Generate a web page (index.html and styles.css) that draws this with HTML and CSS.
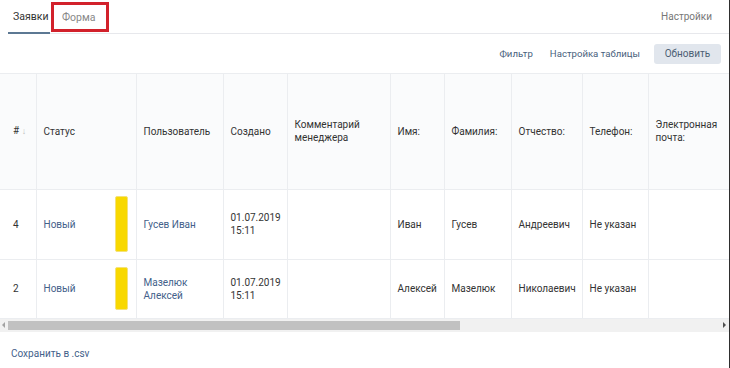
FILE: index.html
```html
<!DOCTYPE html>
<html lang="ru">

<head>
	<meta charset="UTF-8">
	<meta name="viewport" content="width=device-width, initial-scale=1.0">
	<title>Заявки</title>
	<link rel="stylesheet" href="styles.css">
</head>

<body>
	<div class="page">
		<nav class="tabs">
			<a class="tab active" href="#">Заявки</a>
			<a class="tab marked" href="#">Форма</a>
			<a class="tab settings" href="#">Настройки</a>
		</nav>

		<div class="toolbar">
			<a class="tool-link" href="#">Фильтр</a>
			<a class="tool-link" href="#">Настройка таблицы</a>
			<button class="refresh" type="button">Обновить</button>
		</div>

		<div class="table-wrap">
			<table class="orders">
				<colgroup>
					<col class="c-num">
					<col class="c-status">
					<col class="c-user">
					<col class="c-date">
					<col class="c-comment">
					<col class="c-name">
					<col class="c-surname">
					<col class="c-patronymic">
					<col class="c-phone">
					<col class="c-email">
					<col class="c-rest">
				</colgroup>
				<thead>
					<tr>
						<th class="num"># <span class="sort">&#8595;</span></th>
						<th>Статус</th>
						<th>Пользователь</th>
						<th>Создано</th>
						<th>Комментарий<br>менеджера</th>
						<th>Имя:</th>
						<th>Фамилия:</th>
						<th>Отчество:</th>
						<th>Телефон:</th>
						<th>Электронная<br>почта:</th>
						<th></th>
					</tr>
				</thead>
				<tbody>
					<tr class="row-tall">
						<td class="num">4</td>
						<td>
							<div class="status"><a href="#">Новый</a><span class="bar"></span></div>
						</td>
						<td><a href="#">Гусев Иван</a></td>
						<td>01.07.2019<br>15:11</td>
						<td></td>
						<td>Иван</td>
						<td>Гусев</td>
						<td>Андреевич</td>
						<td>Не указан</td>
						<td></td>
						<td></td>
					</tr>
					<tr class="row-short">
						<td class="num">2</td>
						<td>
							<div class="status"><a href="#">Новый</a><span class="bar"></span></div>
						</td>
						<td><a href="#">Мазелюк<br>Алексей</a></td>
						<td>01.07.2019<br>15:11</td>
						<td></td>
						<td>Алексей</td>
						<td>Мазелюк</td>
						<td>Николаевич</td>
						<td>Не указан</td>
						<td></td>
						<td></td>
					</tr>
				</tbody>
			</table>
		</div>

		<div class="scrollbar">
			<span class="arrow left"></span>
			<div class="track"><div class="thumb"></div></div>
			<span class="arrow right"></span>
		</div>

		<footer class="footer">
			<a href="#">Сохранить в .csv</a>
		</footer>
	</div>
</body>

</html>
```

FILE: styles.css
```css
* {
	margin: 0;
	padding: 0;
	box-sizing: border-box;
	font-family: Roboto, 'Liberation Sans', sans-serif;
}

body {
	background: #fff;
	color: #333;
	font-size: 10px;
}

a {
	color: #43618a;
	text-decoration: none;
}

.page {
	width: 730px;
	height: 368px;
	border-right: 1px solid #2e2e2e;
	overflow: hidden;
}

/* tabs */

.tabs {
	display: flex;
	height: 34px;
	margin-left: 8px;
	padding-right: 12px;
	border-bottom: 1px solid #e7e8ec;
}

.tab {
	display: flex;
	align-items: center;
	padding: 0 5px;
	color: #888;
	font-size: 10.5px;
}

.tab.active {
	width: 42px;
	color: #333;
	border-bottom: 2px solid #5c7893;
	margin-bottom: -1px;
}

.tab.marked {
	width: 58px;
	margin: 2px 0 1px 1px;
	padding: 0 0 0 8px;
	border: 3px solid #d2212b;
}

.tab.settings {
	margin-left: auto;
	color: #777;
	font-size: 10px;
}

/* toolbar */

.toolbar {
	display: flex;
	align-items: center;
	justify-content: flex-end;
	height: 39px;
	padding-right: 8px;
}

.tool-link {
	color: #47607c;
	margin-left: 17px;
	font-size: 9.6px;
}

.refresh {
	margin-left: 14px;
	width: 67px;
	height: 20px;
	border: none;
	border-radius: 3px;
	background: #e1e6ed;
	color: #4c5f74;
	font-size: 10px;
}

/* table */

.table-wrap {
	overflow: hidden;
	border-top: 1px solid #ebedf0;
}

.orders {
	table-layout: fixed;
	width: 1160px;
	border-collapse: collapse;
}

.c-num { width: 36px; }
.c-status { width: 100px; }
.c-user { width: 87px; }
.c-date { width: 64px; }
.c-comment { width: 103px; }
.c-name { width: 54px; }
.c-surname { width: 67px; }
.c-patronymic { width: 71px; }
.c-phone { width: 66px; }
.c-email { width: 130px; }

.orders th,
.orders td {
	border-right: 1px solid #ebedf0;
	border-bottom: 1px solid #ebedf0;
	padding: 0 6px 0 7px;
	text-align: left;
	vertical-align: middle;
	line-height: 13px;
	font-weight: 400;
}

.orders th {
	height: 115px;
	background: #fafbfc;
}

.orders .num {
	padding-left: 13px;
}

.sort {
	color: #bbb;
	font-size: 9px;
}

.row-tall td {
	height: 70px;
}

.row-short td {
	height: 59px;
}

.status {
	display: flex;
	align-items: center;
	justify-content: space-between;
	padding-right: 2px;
}

.bar {
	width: 13px;
	border-radius: 2px;
	background: #f8d800;
	border: 1px solid #f4e27a;
}

.row-tall .bar {
	height: 56px;
}

.row-short .bar {
	height: 43px;
}

/* scrollbar */

.scrollbar {
	display: flex;
	align-items: center;
	height: 13px;
	background: #f1f1f1;
}

.arrow {
	width: 0;
	height: 0;
	border-top: 3px solid transparent;
	border-bottom: 3px solid transparent;
}

.arrow.left {
	margin: 0 3px 0 2px;
	border-right: 3px solid #a3a3a3;
}

.arrow.right {
	margin: 0 3px 0 2px;
	border-left: 3px solid #505050;
}

.track {
	flex: 1;
}

.thumb {
	width: 452px;
	height: 9px;
	background: #c1c1c1;
}

/* footer */

.footer {
	padding: 16px 11px 0;
}
```
